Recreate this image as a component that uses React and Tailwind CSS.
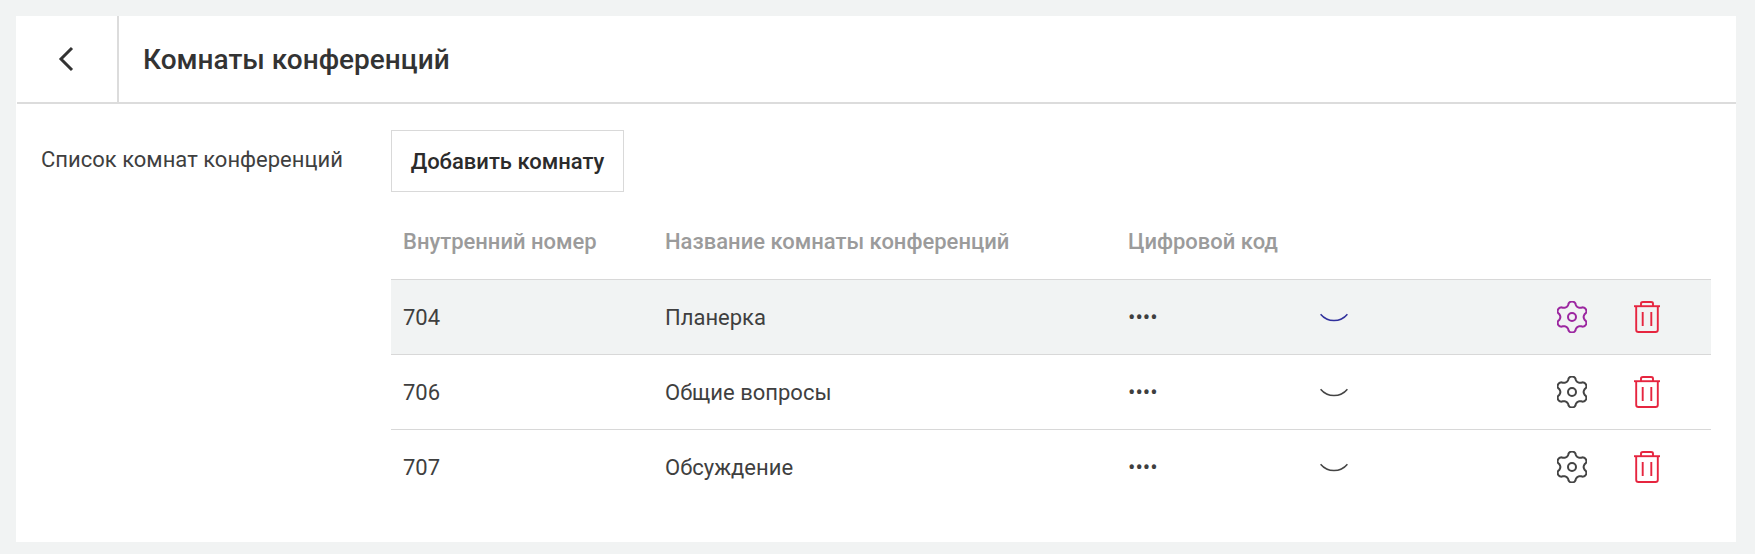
import React from 'react';

const rooms = [
  { id: '704', name: 'Планерка', active: true },
  { id: '706', name: 'Общие вопросы' },
  { id: '707', name: 'Обсуждение' },
];

// six blunt lobes, pointing up and down
const gearPath = () => {
  const pts = [];
  for (let i = 0; i < 180; i++) {
    const a = (i / 180) * Math.PI * 2;
    const c = Math.cos(6 * a);
    const r = 13.4 + 2.1 * Math.sign(c) * Math.pow(Math.abs(c), 0.65);
    pts.push(`${(15 + r * Math.sin(a) * 1.03).toFixed(2)} ${(16 - r * Math.cos(a)).toFixed(2)}`);
  }
  return `M${pts.join('L')}Z`;
};

function Gear({ className }) {
  return (
    <svg viewBox="0 0 30 32" className={`w-[30px] h-[32px] ${className}`} fill="none" stroke="currentColor" strokeWidth="2">
      <path d={gearPath()} strokeLinejoin="round" />
      <circle cx="15" cy="16" r="4" />
    </svg>
  );
}

function Trash() {
  return (
    <svg viewBox="0 0 26 32" className="w-[26px] h-[32px] text-[#e6253f]" fill="none" stroke="currentColor" strokeWidth="1.9">
      <path d="M0 5.2H26" />
      <path d="M7 5V2.5Q7 1 9 1H17Q19 1 19 2.5V5" />
      <path d="M2.2 5.2V29Q2.2 31 4.4 31H21.6Q23.8 31 23.8 29V5.2" />
      <path d="M8.7 11V25M17.3 11V25" />
    </svg>
  );
}

function Smile({ className }) {
  return (
    <svg viewBox="0 0 28 9" className={`w-[28px] h-[9px] ${className}`} fill="none" stroke="currentColor" strokeWidth="1.5">
      <path d="M.6 1.2Q6 7.6 14 7.6T27.4 1.2" />
    </svg>
  );
}

export default function App() {
  return (
    <div className="min-h-[554px] bg-[#f1f3f3] pt-4 pb-3 pl-4 pr-[19px] text-[#3f3f3f] font-['Roboto',sans-serif]">
      <div className="bg-white h-[526px]">
        <div className="flex h-[88px] ml-px border-b-2 border-[#dcdcdc]">
          <button className="w-[102px] flex items-center justify-center border-r-2 border-[#dcdcdc]">
            <svg viewBox="0 0 16 26" className="w-[16px] h-[26px] text-[#333] mr-[2px]" fill="none" stroke="currentColor" strokeWidth="3">
              <path d="M14 2L3 13L14 24" />
            </svg>
          </button>
          <h1 className="pl-[24px] pt-[2px] flex items-center text-[28px] font-medium text-[#333]">Комнаты конференций</h1>
        </div>

        <div className="flex pt-[26px] pl-[25px] pr-[25px]">
          <div className="w-[350px] pt-[16px] text-[22px] leading-[28px] shrink-0">Список комнат конференций</div>
          <div className="flex-1">
            <button className="h-[62px] w-[233px] border border-[#d9d9d9] text-[22px] font-medium text-[#2b2b2b]">
              Добавить комнату
            </button>
            <div className="flex h-[87px] items-center pl-3 pt-[12px] text-[22px] font-medium text-[#9b9b9b]">
              <div className="w-[262px]">Внутренний номер</div>
              <div className="w-[463px]">Название комнаты конференций</div>
              <div>Цифровой код</div>
            </div>
            {rooms.map((r) => (
              <div key={r.id} className={`flex h-[75px] items-center pl-3 text-[22px] border-t border-[#d8d8d8] ${r.active ? 'bg-[#f1f3f3]' : ''}`}>
                <div className="w-[262px]">{r.id}</div>
                <div className="w-[463px]">{r.name}</div>
                <div className="w-[192px]">••••</div>
                <div className="w-[237px] pt-[1px]">
                  <Smile className={r.active ? 'text-[#30309c]' : 'text-[#444]'} />
                </div>
                <Gear className={r.active ? 'text-[#9c27a0]' : 'text-[#444]'} />
                <div className="ml-[47px]">
                  <Trash />
                </div>
              </div>
            ))}
          </div>
        </div>
      </div>
    </div>
  );
}
